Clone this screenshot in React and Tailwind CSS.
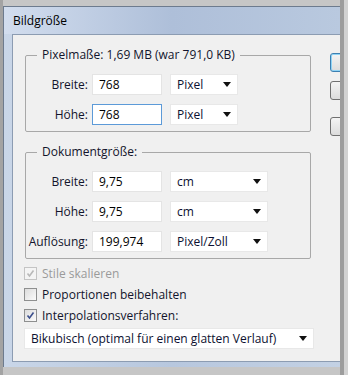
import React from 'react'

function Arrow() {
  return (
    <svg width="8" height="5" viewBox="0 0 8 5" className="shrink-0">
      <path d="M0 0h8L4 5z" fill="#111" />
    </svg>
  )
}

function Input({ value, focused }) {
  return (
    <div
      className={`w-[70px] h-[21px] bg-white flex items-center pl-[6px] text-black ${
        focused ? 'border border-[#5c9ad8]' : 'border border-[#e4e4e4]'
      }`}
    >
      {value}
    </div>
  )
}

function Select({ value, width }) {
  return (
    <div
      className={`${width} h-[21px] bg-white border border-[#e8e8e8] flex items-center justify-between pl-[6px] pr-[6px] text-[#0c1030]`}
    >
      <span>{value}</span>
      <Arrow />
    </div>
  )
}

function Row({ label, value, unit, focused, selWidth }) {
  return (
    <div className="flex items-center h-[21px]">
      <div className="w-[66px] text-right pr-[4px] text-[#12142c]">{label}</div>
      <Input value={value} focused={focused} />
      <div className="ml-[8px]">
        <Select value={unit} width={selWidth} />
      </div>
    </div>
  )
}

function Group({ title, children }) {
  return (
    <fieldset className="w-[286px] border border-[#a8a8a8] rounded-[2px]">
      <legend className="ml-[11px] px-[5px] leading-[16px] text-[#12142c]">{title}</legend>
      <div className="flex flex-col gap-[9px] pt-[11px] pb-[6px]">{children}</div>
    </fieldset>
  )
}

function Check({ label, checked, disabled }) {
  return (
    <div className="flex items-center h-[21px]">
      <div
        className={`w-[13px] h-[13px] border flex items-center justify-center bg-gradient-to-br ${
          disabled
            ? 'border-[#c4c4c4] from-[#f4f4f4] to-[#f4f4f4]'
            : 'border-[#8e8f8f] from-[#dcdcdc] to-[#fbfbfb]'
        }`}
      >
        {checked && (
          <svg width="9" height="9" viewBox="0 0 9 9">
            <path
              d="M1.5 4.5 L3.5 7 L7.5 1.5"
              fill="none"
              stroke={disabled ? '#b8b8b8' : '#3c4f8c'}
              strokeWidth="1.6"
            />
          </svg>
        )}
      </div>
      <span className={`ml-[5px] ${disabled ? 'text-[#9a9a9a]' : 'text-[#12142c]'}`}>{label}</span>
    </div>
  )
}

function Button({ def, mt }) {
  return (
    <div
      className={`${mt} w-[75px] h-[19px] rounded-[3px] border bg-gradient-to-b from-[#f4f4f4] to-[#dcdcdc] ${
        def ? 'border-[#3c7fb1] shadow-[inset_0_0_0_1px_#8fd3f5]' : 'border-[#707070]'
      }`}
    />
  )
}

export default function App() {
  return (
    <div className="w-[348px] h-[375px] bg-[#c6c6c6] overflow-hidden font-['Open_Sans','Noto_Sans',sans-serif] text-[12px] leading-[16px]">
      <div className="flex h-full">
        <div className="w-[3px] bg-[#a3a3a3]" />
        <div className="flex flex-col w-[337px]">
          <div className="h-[6px] bg-[#c6c6c6]" />
          {/* window */}
          <div className="flex flex-col h-[361px] border-l border-t border-[#6d7b8e] bg-gradient-to-r from-[#c9d6e8] via-[#b7c7de] to-[#c3d1e4]">
            <div className="h-[27px] flex items-center pl-[9px] text-black bg-gradient-to-r from-[#d2ddee] via-[#aebfd9] to-[#b9c9df]">
              Bildgröße
            </div>
            <div className="flex-1 ml-[8px] mb-[5px] flex bg-[#f0f0f0] border-l border-t border-b border-[#8c9cb2] overflow-hidden">
              <div className="w-[316px] shrink-0 pl-[11px] flex flex-col">
                <div className="mt-[12px] ml-[1px]">
                  <Group title="Pixelmaße: 1,69 MB (war 791,0 KB)">
                    <Row label="Breite:" value="768" unit="Pixel" selWidth="w-[68px]" />
                    <Row label="Höhe:" value="768" unit="Pixel" focused selWidth="w-[68px]" />
                  </Group>
                </div>
                <div className="mt-[12px] ml-[1px]">
                  <Group title="Dokumentgröße:">
                    <Row label="Breite:" value="9,75" unit="cm" selWidth="w-[98px]" />
                    <Row label="Höhe:" value="9,75" unit="cm" selWidth="w-[98px]" />
                    <Row label="Auflösung:" value="199,974" unit="Pixel/Zoll" selWidth="w-[98px]" />
                  </Group>
                </div>
                <div className="mt-[4px] flex flex-col">
                  <Check label="Stile skalieren" checked disabled />
                  <Check label="Proportionen beibehalten" />
                  <Check label="Interpolationsverfahren:" checked />
                </div>
                <div className="mt-[2px]">
                  <Select value="Bikubisch (optimal für einen glatten Verlauf)" width="w-[290px]" />
                </div>
              </div>
              <div className="flex flex-col shrink-0 pl-[1px]">
                <Button def mt="mt-[18px]" />
                <Button mt="mt-[9px]" />
                <Button mt="mt-[17px]" />
              </div>
            </div>
          </div>
        </div>
        <div className="w-[4px] bg-[#9d9d9d]" />
        <div className="flex-1 bg-[#d2d2d2]" />
      </div>
    </div>
  )
}
